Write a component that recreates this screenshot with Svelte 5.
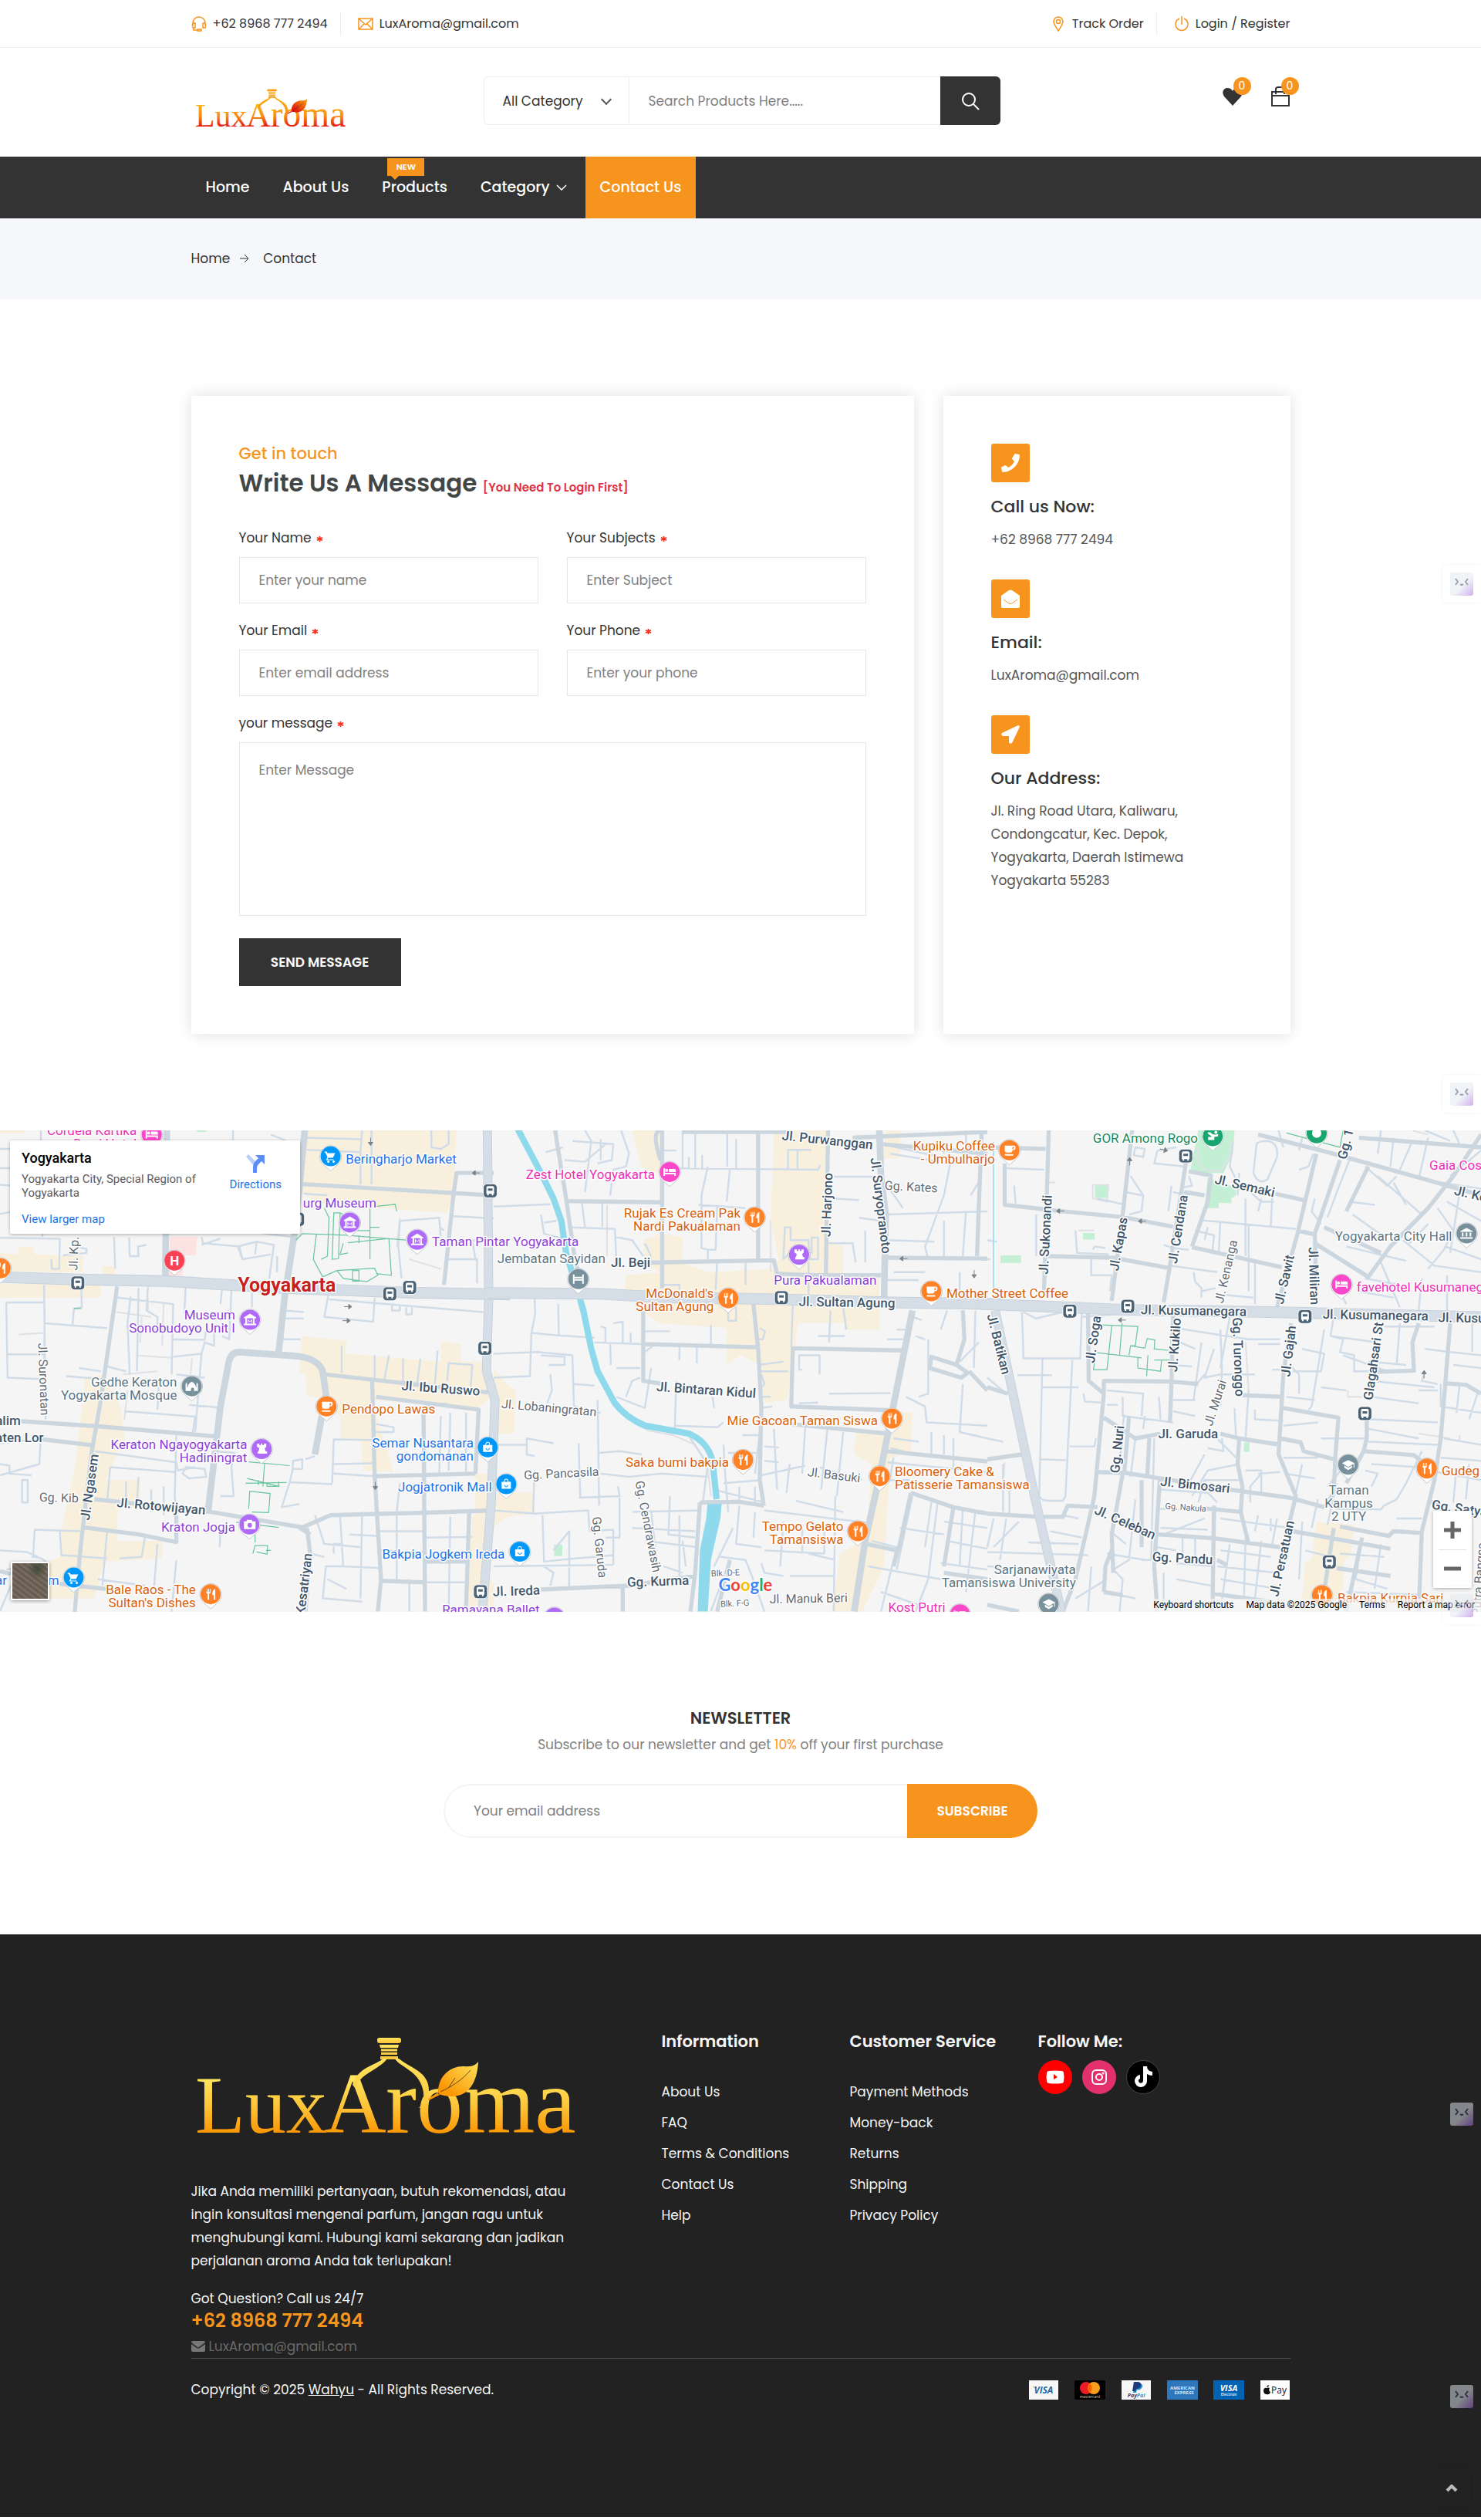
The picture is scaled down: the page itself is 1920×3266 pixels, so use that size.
<script>
  const topLeft = [
    { icon: 'headset', text: '+62 8968 777 2494' },
    { icon: 'mail', text: 'LuxAroma@gmail.com' }
  ];
  const topRight = [
    { icon: 'pin', text: 'Track Order' },
    { icon: 'power', text: 'Login / Register' }
  ];
  const nav = [
    { text: 'Home' },
    { text: 'About Us' },
    { text: 'Products', badge: 'NEW' },
    { text: 'Category', more: true },
    { text: 'Contact Us', active: true }
  ];
  const fields = [
    { id: 'name', label: 'Your Name', hint: 'Enter your name', type: 'text' },
    { id: 'subject', label: 'Your Subjects', hint: 'Enter Subject', type: 'text' },
    { id: 'email', label: 'Your Email', hint: 'Enter email address', type: 'email' },
    { id: 'phone', label: 'Your Phone', hint: 'Enter your phone', type: 'tel' }
  ];
  const contacts = [
    { icon: 'phone', title: 'Call us Now:', text: '+62 8968 777 2494' },
    { icon: 'open', title: 'Email:', text: 'LuxAroma@gmail.com' },
    {
      icon: 'arrow',
      title: 'Our Address:',
      text: 'Jl. Ring Road Utara, Kaliwaru, Condongcatur, Kec. Depok, Yogyakarta, Daerah Istimewa Yogyakarta 55283'
    }
  ];
  const linkColumns = [
    { title: 'Information', links: ['About Us', 'FAQ', 'Terms & Conditions', 'Contact Us', 'Help'] },
    { title: 'Customer Service', links: ['Payment Methods', 'Money-back', 'Returns', 'Shipping', 'Privacy Policy'] }
  ];

  // The map is drawn as three tiles side by side; tile units are finer than screen units.
  const SX = 0.4082;
  const SY = 0.4146;
  const mx = (t, x) => t * 640 + x * SX;
  const my = (y) => (y - 37) * SY;
  const tileTransform = (t) => `translate(${t * 640} ${-37 * SY}) scale(${SX} ${SY})`;

  const tiles = [
    {
      commercial:
        'M0 420L55 425L60 400L105 400L110 425L265 430L260 480L0 478ZM0 515L320 520L320 560L0 560ZM325 462H365V488H325ZM965 37L1450 37L1440 240L1420 295L1010 265L955 230ZM960 680L1100 695L1098 735L1400 760V695L1465 705V760H1545L1560 870L1520 905L1180 880L1250 1105L1155 1100L1145 1005L1080 1000L1082 930L1030 880L975 865L970 795L950 795ZM270 810L330 800L385 905L395 1000L335 1130L445 1130L445 1215L375 1210L370 1320L515 1320L515 1375L330 1385L300 1500L100 1500L120 1400L190 1370L195 1285L240 1080ZM1510 1110H1568V1240H1510ZM1500 1240L1540 1240L1530 1420L1568 1450V1541H1480ZM0 37H80V46H0Z',
      pink: 'M540 370H628L620 428H582L580 490L535 494Z',
      green: 'M625 37H655V42H625Z',
      minor:
        'M0 95H130M0 155H130V37M0 207L40 210L44 290L0 298M130 95L135 370M0 373L190 376L188 470L165 470L163 440M245 376L240 400L275 408V420L200 428M362 370L366 470M410 372L412 430H440L438 400L465 395M20 575H138M20 575L24 810L140 815L142 600M25 737H140M142 640L340 655M140 520L145 940M258 525L260 590L235 594L230 650M372 560L550 580L545 800M415 555L405 640L412 800M440 530L435 790M470 525L465 600L500 620L500 660M590 528L585 610M545 690L650 692L655 660L680 670V710L650 700L640 735L550 745M640 735L620 980M560 800L650 810M600 895L690 903M395 915L620 932L612 980M505 820L500 910M210 805L330 815M250 780L320 790M340 775L400 790M705 535L700 580M735 535L728 690L705 680M800 545V590M0 1015L90 1005M0 1080L30 1085V1110L100 1115M70 1130V1200H88V1130ZM130 985L125 1080L0 1115M300 1040L560 1075L565 1100L620 1090M590 1090L650 1095L655 1120L600 1125L580 1110ZM560 990L555 1180L560 1230M350 1090L340 1200M350 1090L555 1105M400 1135V1190M440 1120L435 1195M480 1160V1230M520 1150V1240M680 1040L745 1045L735 1090L742 1180L700 1180M110 1285L255 1290M110 1285L105 1370M190 1290L195 1365L340 1375M340 1290L325 1460M460 1310L450 1370L380 1375M500 1330L490 1460M560 1380L545 1541M0 1350L85 1355L120 1370M60 1430H140M100 1370Q160 1370 150 1420M700 1280L698 1340M0 1540L60 1400M20 1410L100 1400M310 1440L460 1460M640 370L645 390L760 400L770 440L860 425M770 440L755 400L815 385L870 395L865 430L855 500M815 385L810 425M640 395L700 375M740 37V70M880 430V480M860 50L910 70M690 340L925 370M975 98L1145 105L1150 37M1145 105V205M975 60L1145 65M1180 37V205M1370 37V90L1400 95L1425 80L1425 37M965 235L1040 240M1270 320L1395 310L1400 380M1270 320L1265 400L1275 500M1395 340L1410 350M1430 305L1568 312M1430 380L1568 382M1420 440L1515 440V515M1510 440L1500 380M905 600L965 605M905 625L965 625M895 690L955 690M1045 540L1030 620L1185 635L1190 560M1045 565L1535 605M1245 580V600H1270V585M1290 590V612H1308V590M1085 795V710M1190 740V815M1235 740L1220 820M1280 750V825M1335 750L1325 830M1390 725L1380 840M1420 820L1425 765L1500 770L1495 840M1350 900L1420 890M1195 955L1250 965V980H1190M1180 1005L1060 1003L1055 1140M920 1137L1055 1143M920 1137L895 1215L950 1205M930 1070L960 1065V1095L930 1095ZM930 1095L920 1137M1000 1055L970 1065M1060 1080L1185 1078M1060 1110L1190 1118M1270 1140L1260 1230M1400 930L1395 1110M1430 920L1425 1100M1480 920V1105M1200 1290H1345M1260 1235V1440M1210 1350L1350 1355M1300 1440V1541M1000 1240L1030 1330L1150 1340M1150 1230L1145 1500M1110 1300L1200 1305M1080 1240L1090 1400L1035 1400L1025 1500L1150 1510M1090 1400L1205 1405M1430 1245L1425 1541M1350 1310L1500 1308M1350 1450H1490M1040 1440L1100 1470M985 1360L1030 1370M1060 1360V1330H1090',
      path:
        'M60 675L140 670M370 605L480 620M400 650L550 665M430 740L545 748M390 800L500 790M470 560V600M520 575L515 710M450 620L445 700M405 850L395 940M610 750L605 800M1270 310L1260 400M1300 440L1400 470',
      mid:
        'M372 525L320 880L290 1050L255 1350L235 1568M50 945L310 962L690 994M110 1000L300 1022M265 1278L440 1300L560 1324V1240M300 1190L660 1228L960 1278L1050 1240L1350 1232L1568 1225M1182 820L1190 1120L1210 1440L1200 1541M1190 1118L1510 1110M1195 870L1520 910L1510 1110M1490 1230L1480 1541M1345 900L1350 1541M960 205L1560 240M1568 170H1450L1440 240L1410 520M975 1280L985 1360L970 1541M1035 800L1290 828L1550 856M60 1440L420 1480M0 1415L60 1430M950 1278L985 1300M1210 1445L1350 1450M1350 1385L1490 1385',
      wide:
        'M968 37L940 330L905 550L885 730M530 37L525 500M660 1235L700 900L725 770Q730 730 760 730L940 742Q1010 750 1025 790L1035 860L1000 1050',
      major: 'M-20 495L240 503L520 508L900 530L1300 544L1620 550',
      major2: 'M1548 37L1552 560L1545 790L1572 880L1560 1200L1530 1568',
      trail:
        'M940 380L960 360L1100 365L1290 380M1030 280L1045 310L1040 430L1020 440M1060 295L1055 440L1075 438L1080 295ZM1080 295L1110 310M1175 270V440M1175 340H1205M1110 350H1175M1140 365V390M1105 388L1235 375L1243 490L1195 485M1005 360L995 440L1025 495L1070 475L1190 468L1200 490L1165 510L1090 500L1070 475M1120 475H1140V508H1120ZM1090 390L1080 425L1105 420M1190 275L1255 268L1260 290M235 594H258M790 1073L920 1085M840 1080L835 1150M780 1140L910 1138M785 1125L885 1150V1135M820 1130V1145M848 1140V1150H888M793 1165L858 1172L853 1232L800 1230M793 1165L790 1220M750 1262L885 1278M810 1300V1325M803 1360L810 1335L850 1335L848 1362L815 1355M845 1350H860'
    },
    {
      commercial:
        'M440 37H535L545 175L470 155L450 80ZM890 37H1060L1055 380L1110 400V490L1225 500V660H1115V640H965L955 760L930 880L860 890L850 770L785 740L740 770V655L530 640L480 610L470 560L415 540L420 490L530 480L480 460L475 380L530 360L600 370L598 450L680 480L895 470L905 440L880 320ZM1245 37H1290V125H1235ZM1150 980L1235 990L1245 910L1330 920L1325 1045L1260 1060L1240 1400L1170 1541H1075L1100 1360L1185 1310L1200 1080L1145 1050ZM0 780L40 830L70 850L65 985L0 985ZM0 1170H130V1235L45 1245L0 1275Z',
      pink: '',
      green: 'M192 1332H218V1368H192Z',
      minor:
        'M0 275L180 268M200 90V37M225 130L290 135L355 80M290 37L310 70L290 230M250 70L380 80L375 130L330 140M340 65V130M405 37L430 110L420 150L380 160L370 240M165 105L220 90M560 155L1030 160L1038 145M600 37V155M640 37V155M620 120V155M662 115V155M742 37V150M770 65V155M540 100H580M935 160V98H1010M965 98V155M150 300L160 360L220 375M160 325L200 320M235 340L385 345L390 450M385 370L440 380L475 430M280 260L290 340M345 260V340M480 390L500 430M680 150L660 240L660 405L680 410V440M650 270L800 280M750 160L740 260M710 270L705 410L680 410M800 440V520M530 520H590V535M710 440L705 535M745 590V632H770V590M130 560L132 610L120 670L205 678L320 685M205 580L207 678M120 670L115 805L0 810M0 735L140 730L250 740L255 900M150 740L225 745V770L175 770M180 800L185 850L170 890M255 830L320 835M320 700L470 705M340 650L355 655V700M380 640L410 635V700M370 700L372 770M390 780H465M435 670V700M480 665H560M480 730L520 700M500 780L480 905L390 870M465 810L440 820L420 870M580 820L575 970M590 705V755M645 715V765M690 645V705M695 870L700 905M575 960L710 965L730 950M620 980L625 1000L680 1080L665 1195M330 880L335 1210M320 920H340M270 1015L275 1185M255 900L330 920M0 1020H105V1000L190 1015M105 1010V1050L130 1055M335 1045L400 1040L470 1050M340 1110L430 1120L530 1110L680 1120M270 1185L400 1180L395 1150M130 1100L125 1235M0 1225L130 1235L300 1225L305 1290L380 1285M155 1240L160 1385L260 1375L380 1365M160 1400L190 1420L180 1460M190 1350L240 1290L240 1465M0 1400L380 1395M380 1285L380 1395M400 1185V1310L355 1310M440 1230L660 1225M560 1180L555 1300L640 1310M500 1225L520 1400M590 1240V1440M440 1280L640 1290M480 1320L650 1340M600 1320L610 1400M600 1420L540 1400M730 1020L735 1110L745 1230M700 1160L860 1200M730 1140L850 1130M780 1150V1200M830 1150V1200M850 940L830 1110M790 990L850 990M745 1045H850M850 870H880M850 905L885 900M860 1025L905 1028M860 1070L905 1075M850 1115L990 1085M990 960L980 1110M1060 970L1040 1160M1110 980L1090 1180M1035 1090L1170 1130M890 970L900 1160M940 1080L930 1170M960 1195L1110 1230M860 1225L1200 1265M760 1280L720 1360L700 1400M780 1210L770 1330L850 1340M830 1230L825 1310M720 1370L800 1380L820 1430M690 1540L750 1380M850 1390L860 1420L920 1430M920 1260L910 1400M980 1270V1360M1050 1280V1360L860 1350M1085 1180L1080 1541M940 1430L1080 1430M820 1430L860 1541M1000 1360L1085 1380M950 585L945 715M970 740H1035V800M970 740V785L980 785M1070 600L1065 700M1110 590L1120 660M1030 680L1115 680M970 890L1030 888M1065 860L1260 858M840 770L920 760M850 790H935M845 655L862 665L855 690L840 690M850 800L860 830L850 840M1000 590V450M1060 390H1140L1150 450M1180 350V450M1075 250L1160 255M1160 310L1230 320M1080 182H1210M1250 300L1568 290M1230 80L1420 120M1260 110L1450 140L1430 240L1370 400L1380 440M1250 210L1300 280M1420 70L1430 110M1500 37V90L1540 70M1540 200L1515 240M1480 480V580M1270 480H1370M1250 505H1350M1330 620L1360 630M1280 660H1320M1250 690H1300M1340 680L1370 690M1440 600L1420 660M1530 600L1525 780M1490 830L1480 980L1568 1000M1380 690V860L1350 870M1310 870L1370 900L1375 950L1568 960M1270 1000L1350 1010M1390 980V1050M1430 990V1050M1460 1000V1090M1250 1075L1568 1105M1250 1130H1320M1260 1030L1300 1040M1330 1180L1280 1410M1200 1320L1280 1340L1230 1541M1390 1200L1370 1340M1410 1200L1380 1440L1340 1541M1290 1280L1430 1300M1430 1260L1568 1280M1190 1400L1420 1440M1490 1215L1480 1400M1530 1225L1500 1480M1440 1320L1568 1345M1420 1390L1568 1410M1230 1480L1410 1541M1270 1060L1260 1120M1540 700L1480 760M1250 380L1400 385M1430 320V430M1500 290L1490 430M925 340H943V380H1000L1005 440H1030V372H1010V420H940L920 440Z',
      path:
        'M85 37L190 260L215 320L230 440M270 580L330 780L380 880L430 940L490 975L570 990L640 1020L680 1090L690 1180M360 270V430M880 320V480',
      mid:
        'M225 258L535 262M195 37L230 250L255 420L280 530M535 37V530M840 37V440M500 450L890 443L900 485L1010 490L1230 490M1062 37L1055 490M600 42L930 42M1140 60L1568 42M1235 80L1568 110M1250 435L1568 438M475 590V820L540 830M480 705L840 715M825 580L840 720L850 900L845 1130L858 1210M945 900L950 718L1300 725M940 900L1260 912M945 955L1250 985M1250 1040L1568 1072M660 1200L780 1198L858 1210M655 1200L640 1420L625 1541M150 1472L430 1460L640 1430M410 1465V1541M1490 600L1495 690L1470 770M1390 745L1470 770L1505 795L1485 810L1385 780ZM1510 790L1568 850M1325 1170L1460 1215L1568 1235M1460 1215L1430 1400M1325 1170L1290 1330L1270 1400M1185 1330L1280 1350M1550 37L1535 430M530 37Q500 40 530 130M1430 1420L1568 1440M710 1541L750 1380M0 830V1100',
      wide: 'M1225 37L1230 180L1245 300L1240 560M1330 600L1265 920L1225 1120L1180 1320L1145 1541',
      major: 'M-20 545L340 548L520 558L900 565L1260 575L1620 580',
      major2: '',
      river: true,
      trail: ''
    },
    {
      commercial: 'M1045 1260L1165 1270L1155 1360L1130 1390V1470L1080 1541H995L1010 1385L1030 1380Z',
      pink: '',
      green:
        'M670 37L785 37L780 110L750 170H690L645 160ZM700 185L790 215V240L775 250V265L735 263V280L690 280ZM342 210H383V248H342ZM304 358H341V378H304ZM42 428H107V451H42ZM815 1012H832V1042H815Z',
      minor:
        'M55 90L185 95M60 155L180 160M85 210L90 265M155 300V430M0 380L30 385M0 440H10M280 350L285 420L385 425M335 410L340 400L375 405M330 430V490L395 490L390 540M470 90L500 95L495 120L465 115ZM540 100L530 140L625 150M540 100L600 90M455 180L495 240L490 290L450 300M440 230L490 240M350 250L440 270M640 180L650 210L625 215M585 210L575 290M590 230L640 240M780 75L770 150L790 190L870 260M855 80Q860 70 890 70Q925 75 920 120L890 190Q860 210 845 170ZM800 170L795 240M820 250V430M870 250L860 290M905 240L900 340M870 260H910M680 318L980 345M700 340L690 380M660 350L720 365L715 415M735 420L740 320M830 330V540M560 395L590 405L640 410M580 460L730 480M655 480L660 510L680 530V560M680 540L725 530M850 450V580M740 550L845 560M1040 250L1030 290L1060 330M990 160L1020 150L1035 110M925 37L940 90M1000 60L990 100M1150 130L1110 230L1080 310M1070 340L1160 380M1200 150L1270 210L1300 180M1150 260L1230 270M1160 300L1260 370M1240 180L1380 300M1290 200L1330 270M1250 37L1240 110M1290 60L1280 150M1350 70L1310 160M1400 60L1370 190M1430 280L1480 350L1450 410L1400 470M1455 400L1568 440M1460 260L1568 320M1400 330L1340 390M1320 380L1420 460L1568 480M1140 400L1330 445M1180 540L1290 560M1130 560L1140 580M1200 500L1310 520M1250 450L1310 590M1380 500L1370 600M1460 490V600M110 605L115 750H295L300 605M115 605L155 625L240 605M175 750L165 1180Q170 1195 200 1195H240L248 1180L270 755M95 802H205M170 840H290M165 1065L250 1068M262 1025L340 1025L345 1000M305 860L310 885L360 888M0 810L60 860M300 620L430 610M0 1150L50 1160M50 1080V1230M0 1000L50 1010M70 1160V1235M20 1250L0 1340M60 1250L40 1380M100 1260L20 1340M200 1290L300 1310M130 1325L290 1330M0 1355L320 1365M0 1400L200 1410M240 1240L290 1250M380 850L495 860L490 930M380 895H415M430 870V930L590 950M435 925L430 960M500 930L495 970M545 870L550 940M590 770L650 775M590 690L660 720M600 655L760 680L830 690L930 690M680 700L655 880M720 720L690 810L740 800L850 800M740 660L745 780L740 900M770 620L740 780M660 880H590M590 915L660 930M690 800L665 830M860 705H930M905 785H940M830 850L820 1000M785 905L790 1000M850 910V940L940 945M990 860V800L960 770M1000 720L1070 735L1060 790L970 790M1070 660L1030 900L1020 910M1090 680L1130 690L1120 730L1165 740V790H1230M1100 620L1090 680L1240 700M1060 840L1140 850M950 870L1040 880M1050 950L940 960M1060 1000L1200 1000M1210 760L1330 770M1220 820L1420 840M1220 870L1370 890M1310 640L1300 770M1260 650H1420M1390 790L1380 820L1430 830M1390 720L1470 730L1568 740M1480 770L1568 780M1440 830V900L1568 920M1370 850L1430 850M1210 940L1430 950M1210 970L1370 1000M1210 1010L1430 1020M1220 1080L1370 1090M1380 1040L1330 1140L1300 1190L1260 1210L1250 1222L1110 1220M1200 1100L1240 1110L1220 1150M1140 1080L1080 1150M1000 1080L980 1170M940 1060L1050 1060M945 1110L1040 1125M860 1110L930 1105M820 1100H870V1170M870 1110L835 1150V1200M650 1180L700 1100L800 1080M690 1050L640 1140M700 1030L750 1040L745 1000M730 1000L790 1060M800 1130L690 1130L670 1200M550 1160L700 1170L730 1200M545 1220L690 1225M550 1280L700 1285M560 1300L690 1250M470 1000L455 1120M470 1190L450 1380L400 1410M530 1000L520 1380L490 1380M430 1000L415 1100M390 1290L440 1330M380 1360L500 1380M400 1410L430 1440L420 1541M370 1480L470 1500M330 1400L320 1541M280 1500L380 1440M540 1340L600 1350M620 1300L620 1360M660 1310V1370M600 1390L720 1400M600 1440L710 1460M560 1420V1520M740 1250L960 1280M740 1350L900 1370M730 1400L920 1420M740 1440L920 1470M860 1240L850 1290M900 1250V1290M820 1310L815 1500M870 1320L850 1500M770 1330L740 1541M920 1250L905 1330M1000 1260L990 1440M1050 1190L1030 1280M1110 1140L1080 1270M1010 1350L1090 1370M1110 1410L1280 1430M1120 1360L1260 1370M1190 1310L1170 1440L1270 1470M1250 1330L1230 1470M1140 1480L1400 1490M1300 1250H1380M1400 1100L1568 1130M1440 1060L1568 1070M1450 1000L1568 1020M1490 1090L1480 1200M1530 1080L1520 1190M1500 830L1490 920M1560 850L1530 940M1460 640V600M1540 640V730M1480 37L1500 80M1390 37L1470 70M1568 100L1470 180M1500 230L1470 420M1440 200L1568 220M1130 740L1270 790',
      path: 'M190 200H215M290 350L340 350M335 208H385L380 260L335 250ZM820 700L830 850M1145 850V870H1190M1370 985L1470 1000M1500 990V1010M55 1075L50 1150M130 1325L220 1330M1350 37L1400 50M670 90L665 130L690 160L740 165L770 120L775 70',
      mid:
        'M195 37L180 540M55 140V270L150 280L220 288L430 308L590 338M460 37L430 300L395 570M632 130L580 460L560 575M640 165L710 178L700 260L650 400M190 430L400 435L580 468M650 402L935 465M625 230L690 240M860 50L1080 105L1390 190L1568 240M1045 110L985 360L920 590M1210 150L1140 290M1120 130L1040 360L1045 550M985 350L1040 362M1040 390L1210 495L1280 400L1400 280L1480 180L1568 50M1070 340L1250 420M320 610L322 820L370 860L340 1180L280 1440L240 1541M370 860V820L580 822L670 830M590 610L585 820L580 950M370 935L470 1000L550 985M450 930L435 1110M515 990L508 1115M350 1105L440 1108L550 1125L770 1160L960 1185L1070 1215M548 1125L530 1400L540 1541M720 1210L715 1541M650 1215L810 1230M965 640L940 800L925 1050L980 1180L960 1260L950 1300M810 865L940 870M740 985L800 1000L920 1018M800 1000L795 1080L810 1150L805 1230L830 1330M940 905L1115 935L1105 1060L1100 1170L1070 1215M930 1000L995 1012L1005 1040L1100 1065M1205 930L1205 1000L1195 1040L1140 1140M1195 1040L1355 1052L1390 1080M1230 792L1355 788L1350 700L1370 640M1470 640L1440 1000L1420 1130L1380 1290L1370 1541M1455 828L1520 832L1568 860M540 1300L720 1312L930 1340M970 1290L1280 1345M1120 1275L1275 1305L1290 1290L1375 1295M1100 1280L1060 1541M1190 1310L1140 1541M1110 1405L1280 1430M715 1485L900 1510M730 1380L760 1395M0 1235L165 1245L240 1245L255 1210L350 1215M0 1065L110 1050M0 840L65 860M370 1480L375 1400L395 1350M400 1420L395 1300L430 1110M490 1130L490 1340M1405 1195L1440 1210M0 90L185 95M1180 60L1568 90M370 1480L430 1490M0 1520L100 1541M915 235L1005 255',
      wide: '',
      major: 'M-20 580L200 588L440 598L900 605L1620 622',
      major2: 'M25 600L90 900L150 1180L235 1541',
      trail:
        'M360 645L478 650L470 710L455 710L450 740M395 648L380 785L337 785L340 765M428 640L420 740M348 732L490 748M455 710L500 718L508 688L532 692L530 720L578 725M510 740L506 805M478 748V780L550 790L553 757M530 755H580M950 45L1120 90L1130 37'
    }
  ];

  // Places: t tile, x/y marker centre, side label placement, c colour, k glyph.
  const C = { o: '#d9610c', b: '#1a73e8', p: '#8a3fd8', k: '#ee2fb8', g: '#18885a', s: '#5b7583' };
  const pinFill = { o: '#ff8126', b: '#0097fb', p: '#b06af8', k: '#fb48cb', g: '#18a56f', s: '#78919d', r: '#f94355' };
  const places = [
    { t: 0, x: 1050, y: 118, c: 'b', k: 'cart', lx: 1098, ly: 140, a: 'start', l: ['Beringharjo Market'] },
    { t: 0, x: 1111, y: 325, c: 'p', k: 'museum', lx: 1195, ly: 278, a: 'end', l: ['urg Museum'] },
    { t: 0, x: 1325, y: 379, c: 'p', k: 'museum', lx: 1372, ly: 400, a: 'start', l: ['Taman Pintar Yogyakarta'] },
    { t: 0, x: 794, y: 629, c: 'p', k: 'museum', lx: 747, ly: 629, a: 'end', l: ['Museum', 'Sonobudoyo Unit I'] },
    { t: 0, x: 609, y: 837, c: 's', k: 'mosque', lx: 562, ly: 838, a: 'end', l: ['Gedhe Keraton', 'Yogyakarta Mosque'] },
    { t: 0, x: 1037, y: 900, c: 'o', k: 'cup', lx: 1086, ly: 922, a: 'start', l: ['Pendopo Lawas'] },
    { t: 0, x: 831, y: 1033, c: 'p', k: 'rook', lx: 785, ly: 1033, a: 'end', l: ['Keraton Ngayogyakarta', 'Hadiningrat'] },
    { t: 0, x: 1549, y: 1028, c: 'b', k: 'bag', lx: 1504, ly: 1029, a: 'end', l: ['Semar Nusantara', 'gondomanan'] },
    { t: 1, x: 40, y: 1143, c: 'b', k: 'bag', lx: -6, ly: 1165, a: 'end', l: ['Jogjatronik Mall'] },
    { t: 0, x: 792, y: 1269, c: 'p', k: 'camera', lx: 747, ly: 1291, a: 'end', l: ['Kraton Jogja'] },
    { t: 1, x: 83, y: 1354, c: 'b', k: 'bag', lx: 35, ly: 1375, a: 'end', l: ['Bakpia Jogkem Ireda'] },
    { t: 0, x: 234, y: 1435, c: 'b', k: 'cart', lx: 188, ly: 1458, a: 'end', l: ['Pasar Ngasem'] },
    { t: 0, x: 669, y: 1487, c: 'o', k: 'fork', lx: 622, ly: 1487, a: 'end', l: ['Bale Raos - The', "Sultan's Dishes"] },
    { t: 0, x: 482, y: 50, c: 'k', k: 'bed', lx: 434, ly: 52, a: 'end', l: ['Cordela Kartika', 'Dewi Hotel'] },
    { t: 0, x: 554, y: 444, c: 'r', k: 'H', lx: 0, ly: 0, a: 'start', l: [] },
    { t: 0, x: 2, y: 468, c: 'o', k: 'fork', lx: 0, ly: 0, a: 'start', l: [] },
    { t: 1, x: 559, y: 167, c: 'k', k: 'bed', lx: 512, ly: 189, a: 'end', l: ['Zest Hotel Yogyakarta'] },
    { t: 1, x: 829, y: 309, c: 'o', k: 'fork', lx: 784, ly: 309, a: 'end', l: ['Rujak Es Cream Pak', 'Nardi Pakualaman'] },
    { t: 1, x: 269, y: 502, c: 's', k: 'bridge', lx: 355, ly: 451, a: 'end', l: ['Jembatan Sayidan'] },
    { t: 1, x: 970, y: 426, c: 'p', k: 'rook', lx: 1053, ly: 519, a: 'middle', l: ['Pura Pakualaman'] },
    { t: 1, x: 745, y: 562, c: 'o', k: 'fork', lx: 699, ly: 561, a: 'end', l: ["McDonald's", 'Sultan Agung'] },
    { t: 1, x: 1390, y: 540, c: 'o', k: 'cup', lx: 1438, ly: 561, a: 'start', l: ['Mother Street Coffee'] },
    { t: 2, x: 70, y: 99, c: 'o', k: 'cup', lx: 24, ly: 99, a: 'end', l: ['Kupiku Coffee', '- Umbulharjo'] },
    { t: 1, x: 1265, y: 938, c: 'o', k: 'fork', lx: 1220, ly: 959, a: 'end', l: ['Mie Gacoan Taman Siswa'] },
    { t: 1, x: 792, y: 1067, c: 'o', k: 'fork', lx: 747, ly: 1088, a: 'end', l: ['Saka bumi bakpia'] },
    { t: 1, x: 1226, y: 1118, c: 'o', k: 'fork', lx: 1274, ly: 1118, a: 'start', l: ['Bloomery Cake &', 'Patisserie Tamansiswa'] },
    { t: 1, x: 1157, y: 1290, c: 'o', k: 'fork', lx: 1111, ly: 1290, a: 'end', l: ['Tempo Gelato', 'Tamansiswa'] },
    { t: 1, x: 193, y: 1560, c: 'p', k: 'camera', lx: 146, ly: 1550, a: 'end', l: ['Ramayana Ballet'] },
    { t: 1, x: 1481, y: 1550, c: 'k', k: 'bed', lx: 1435, ly: 1542, a: 'end', l: ['Kost Putri'] },
    { t: 2, x: 716, y: 55, c: 'g', k: 'park', lx: 669, ly: 76, a: 'end', l: ['GOR Among Rogo'] },
    { t: 2, x: 1046, y: 46, c: 'g', k: 'dot', lx: 0, ly: 0, a: 'start', l: [] },
    { t: 2, x: 1404, y: -60, c: 'k', k: 'bed', lx: 1404, ly: 159, a: 'start', l: ['Gaia Cosmo Hotel'] },
    { t: 2, x: 1522, y: 359, c: 's', k: 'hall', lx: 1476, ly: 381, a: 'end', l: ['Yogyakarta City Hall'] },
    { t: 2, x: 1125, y: 519, c: 'k', k: 'bed', lx: 1173, ly: 541, a: 'start', l: ['favehotel Kusumanegara'] },
    { t: 2, x: 1146, y: 1082, c: 's', k: 'cap', lx: 1148, ly: 1175, a: 'middle', l: ['Taman', 'Kampus', '2 UTY'] },
    { t: 2, x: 1396, y: 1094, c: 'o', k: 'fork', lx: 1443, ly: 1115, a: 'start', l: ['Gudeg Yu Djum'] },
    { t: 2, x: 1063, y: 1490, c: 'o', k: 'fork', lx: 1112, ly: 1512, a: 'start', l: ['Bakpia Kurnia Sari'] },
    { t: 2, x: 195, y: 1517, c: 's', k: 'cap', lx: 281, ly: 1424, a: 'end', l: ['Sarjanawiyata', 'Tamansiswa University'] }
  ];
  const streets = [
    [0, 140, 815, 88, 'Jl. Suronatan', 1], [0, 233, 422, -88, 'Jl. Kp.', 1], [0, 284, 1152, -82, 'Jl. Ngasem'],
    [0, 187, 1184, 2, 'Gg. Kib', 1], [0, 512, 1212, 5, 'Jl. Rotowijayan'], [0, 1400, 843, 4, 'Jl. Ibu Ruswo'],
    [0, 965, 1455, -83, 'Kesatriyan'], [0, -97, 945, 0, 'Kauman Musalim'], [0, -101, 998, 0, 'Jl. Kauman Kadipaten Lor'],
    [1, 435, 450, 0, 'Jl. Beji'], [1, 1060, 67, 6, 'Jl. Purwanggan'], [1, 1058, 270, -88, 'Jl. Harjono'],
    [1, 1230, 272, 83, 'Jl. Suryopranoto'], [1, 1326, 212, 3, 'Gg. Kates', 1], [1, 1122, 574, 1, 'Jl. Sultan Agung'],
    [1, 675, 848, 4, 'Jl. Bintaran Kidul'], [1, 176, 903, 5, 'Jl. Lobaningratan', 1], [1, 215, 1108, -3, 'Gg. Pancasila', 1],
    [1, 1081, 1113, 7, 'Jl. Basuki', 1], [1, 338, 1340, 84, 'Gg. Garuda', 1], [1, 492, 1275, 79, 'Gg. Cendrawasih', 1],
    [1, 522, 1446, -2, 'Gg. Kurma'], [1, 72, 1476, -2, 'Jl. Ireda'], [1, 1000, 1499, -1, 'Jl. Manuk Beri', 1],
    [2, 184, 363, -87, 'Jl. Sukonandi'], [2, 416, 392, -80, 'Jl. Kapas'], [2, 605, 346, -81, 'Jl. Cendana'],
    [2, 757, 478, -77, 'Jl. Kenanga', 1], [2, 818, 210, 13, 'Jl. Semaki'], [2, 943, 503, -77, 'Jl. Sawit'],
    [2, 1038, 492, 88, 'Jl. Miliran'], [2, 1137, 80, -76, 'Gg. 1'], [2, 1535, 235, 13, 'Jl. Ke'],
    [2, 655, 600, 1, 'Jl. Kusumanegara'], [2, 1233, 614, 1, 'Jl. Kusumanegara'], [2, 1600, 624, 1, 'Jl. Kusumanegara'],
    [2, 37, 705, 76, 'Jl. Batikan'], [2, 336, 690, -82, 'Jl. Soga'], [2, 594, 708, -86, 'Jl. Kukilo'],
    [2, 798, 745, 88, 'Gg. Turonggo'], [2, 956, 727, -83, 'Jl. Gajah'], [2, 1226, 758, -82, 'Glagahsari St'],
    [2, 723, 888, -72, 'Jl. Murai', 1], [2, 638, 985, 0, 'Jl. Garuda'], [2, 412, 1034, -84, 'Gg. Nuri'],
    [2, 660, 1145, 6, 'Jl. Bimosari'], [2, 438, 1262, 24, 'Jl. Celeban'], [2, 620, 1374, 3, 'Gg. Pandu'],
    [2, 935, 1375, -78, 'Jl. Persatuan'], [2, 1500, 1218, 8, 'Gg. Satya'], [2, 1560, 1440, -86, 'Putra Bangsa', 1]
  ];
  const tinyStreets = [
    [1, 736, 1420, -3, 'Blk. D-E'], [1, 766, 1515, -3, 'Blk. F-G'], [2, 630, 1215, 4, 'Gg. Nakula']
  ];
  const buses = [
    [0, 247, 514], [0, 1238, 548], [0, 1301, 528], [0, 1540, 718], [0, 1526, 1479], [0, 1557, 226], [0, 945, 315],
    [1, 914, 560], [2, 262, 602], [2, 446, 587], [2, 630, 117], [2, 1009, 619], [2, 1199, 922], [2, 1086, 1386]
  ];
  const arrows = [
    [0, 1177, 72, 90], [0, 1512, 170, 180], [0, 1105, 588, 0], [0, 1100, 632, 0], [0, 1192, 1148, 90],
    [1, 1302, 438, 180], [1, 1526, 486, 90], [2, 452, 134, -90], [2, 560, 98, 15], [2, 232, 289, 180],
    [2, 492, 321, 180], [2, 428, 630, 180], [2, 1387, 800, -90]
  ];
  const payments = ['visa', 'mastercard', 'paypal', 'amex', 'electron', 'apple'];
</script>

{#snippet logo(id, top, mid, bottom)}
  <svg viewBox="0 0 500 134" role="img" aria-label="LuxAroma">
    <defs>
      <linearGradient id="{id}-t" gradientUnits="userSpaceOnUse" x1="0" y1="58" x2="0" y2="128">
        <stop offset="0" stop-color={top} /><stop offset=".5" stop-color={mid} /><stop offset="1" stop-color={bottom} />
      </linearGradient>
      <linearGradient id="{id}-n" x1="0" y1="0" x2="0" y2="1">
        <stop offset="0" stop-color={top} /><stop offset="1" stop-color={mid} />
      </linearGradient>
      <linearGradient id="{id}-l" x1="1" y1="0" x2="0" y2="1">
        <stop offset="0" stop-color={top} /><stop offset=".7" stop-color={bottom} />
      </linearGradient>
    </defs>
    <g fill="url(#{id}-t)" font-family="'Liberation Serif', serif">
      <text x="5" y="127" font-size="106">Lux</text>
      <text x="172" y="127" font-size="112">A</text>
      <text x="252" y="127" font-size="120">roma</text>
    </g>
    <g fill="url(#{id}-n)">
      <rect x="241" y="4" width="31" height="7" rx="3" />
      <path d="M244 13h25l-1 4h-23ZM246 18.500h21v3h-21ZM246 23h21v3h-21ZM245 28h23v4h-23Z" />
      <path d="M249 31C238 40 216 42 209 65L213 70C218 50 243 46 254 31ZM264 31C270 42 294 46 300 70C303 82 300 90 295 95C304 94 307 84 308 74C309 48 285 44 269 31Z" />
    </g>
    <path fill="url(#{id}-l)" d="M320 77C319 52 338 40 354 41C364 42 369 39 372 35C371 57 362 90 320 77ZM320 75L307 83L308 85L322 78Z" />
    <path d="M323 74C336 68 350 60 362 46M334 68L342 56" fill="none" stroke="#222" stroke-opacity=".7" />
  </svg>
{/snippet}

{#snippet pinGlyph(k)}
  {#if k === 'fork'}
    <path d="M-6-7v4q0 2 2 2v8h2v-8q2 0 2-2v-4h-1v4h-1v-4h-1v4h-1v-4h-1v4h-1v-4ZM6-7q-4 1-4 8h2v6h2Z" />
  {:else if k === 'cart'}
    <path d="M-8-6h3l1 2h10l-3 6h-6l-1 2h8v1h-10l2-4l-3-6h-1Z" /><circle cx="-3" cy="7" r="1.500" /><circle cx="4" cy="7" r="1.500" />
  {:else if k === 'bag'}
    <path fill-rule="evenodd" d="M-6-3h3q0-4 3-4t3 4h3v9h-12ZM-2-3h4q0-3-2-3t-2 3ZM-3 1q1 3 3 3t3-3h-1q-1 2-2 2t-2-2Z" />
  {:else if k === 'cup'}
    <path fill-rule="evenodd" d="M-6-6h12q2 0 2 3t-4 3q0 3-3 3h-4q-3 0-3-3ZM4-4v3q2 0 2-2t-2-1ZM-6 5h11v2h-11Z" />
  {:else if k === 'museum'}
    <path fill-rule="evenodd" d="M-8-3L0-8L8-3v1h-2v7h2v2h-16v-2h2v-7h-2ZM-4-2v7h8v-7ZM-3 4v-5l3 3l3-3v5h-1v-3l-2 2l-2-2v3Z" />
  {:else if k === 'rook'}
    <path d="M-6-7h3v2h2v-2h2v2h2v-2h3v4l-2 2l1 4h2v3h-12v-3h1l1-4l-3-2Z" />
  {:else if k === 'bed'}
    <path fill-rule="evenodd" d="M-8-5h2v6h14v4h-2v-2h-12v2h-2ZM-1-4h7q2 0 2 2v2h-9Z" /><circle cx="-4" cy="-2" r="2" />
  {:else if k === 'camera'}
    <path fill-rule="evenodd" d="M-7-4h3l1-2h6l1 2h4v10h-15ZM0-2a3 3 0 1 0 1 0Z" />
  {:else if k === 'mosque'}
    <path d="M-8 6v-9l1-2l1 2v4h1v-2q2-4 5-5q3 1 5 5v2h1v-4l1-2l1 2v9h-5v-3q-2-3-4 0v3Z" />
  {:else if k === 'bridge'}
    <path d="M-7-6h2v3h10v-3h2v12h-2v-4h-10v4h-2ZM-5-1v1h10v-1Z" />
  {:else if k === 'hall'}
    <path d="M-8-3L0-7L8-3v1h-16ZM-6-1h2v5h-2ZM-1-1h2v5h-2ZM4-1h2v5h-2ZM-8 5h16v2h-16Z" />
  {:else if k === 'cap'}
    <path d="M-8-2L0-6L8-2v6h-1v-5L0 3ZM-5 1v3l5 3l5-3v-3l-5 3Z" />
  {:else if k === 'park'}
    <path d="M-7-4q3-3 6 1q4 2 8 0v3q-3 1-5 1v4h-8v-4h5Z" /><circle cx="4" cy="-5" r="2" />
  {:else if k === 'dot'}
    <circle r="6" />
  {:else if k === 'H'}
    <text class="hospital" y="6" text-anchor="middle">H</text>
  {/if}
{/snippet}

{#snippet star()}
  <svg class="star" viewBox="0 0 10 10" role="img" aria-label="required"><path d="M5 1v8M1 3l8 4M9 3L1 7" /></svg>
{/snippet}

{#snippet face()}
  <svg viewBox="0 0 30 30" aria-hidden="true">
    <rect width="30" height="30" rx="3" fill="url(#face-fill)" />
    <path d="M7 8l3 4l-3 4M23 8l-3 4l3 4M13 15q2 2 4 0" fill="none" stroke="#39435a" stroke-width="2" />
  </svg>
{/snippet}

{#snippet lineIcon(name)}
  <svg class="line-icon" viewBox="0 0 20 20" aria-hidden="true">
    {#if name === 'headset'}
      <path d="M2 12V9a8 8 0 0 1 16 0v3M2 9h3v6H2q-1-3 0-6ZM18 9h-3v6h3q1-3 0-6ZM3 15v3h5M8 17h5v2H8Z" />
    {:else if name === 'mail'}
      <path d="M1 3h18v14H1ZM1 3l9 8l9-8M1 17l7-7M19 17l-7-7" />
    {:else if name === 'pin'}
      <path d="M10 19C6 13 4 10 4 7a6 6 0 0 1 12 0c0 3-2 6-6 12Z" /><circle cx="10" cy="7" r="2.500" />
    {:else}
      <path d="M7 3a8 8 0 1 0 6 0M10 0v11" />
    {/if}
  </svg>
{/snippet}

<div class="page">
  <svg class="defs" aria-hidden="true">
    <defs>
      <linearGradient id="face-fill" x1="0" y1="0" x2="1" y2="1">
        <stop offset=".55" stop-color="#e4eaf1" /><stop offset="1" stop-color="#a25fe0" />
      </linearGradient>
    </defs>
  </svg>

  <div class="topbar">
    <div class="container topbar-row">
      {#each [topLeft, topRight] as group}
        <ul class="top-list">
          {#each group as item}
            <li><a href="#top">{@render lineIcon(item.icon)}{item.text}</a></li>
          {/each}
        </ul>
      {/each}
    </div>
  </div>

  <header class="container header">
    <a class="brand" href="#top">{@render logo('head', '#f9b313', '#f98a12', '#e3150d')}</a>
    <form class="search">
      <select aria-label="Category"><option>All Category</option></select>
      <input type="search" aria-label="Search products" placeholder="Search Products Here....." />
      <button type="button" aria-label="Search">
        <svg viewBox="0 0 24 24" aria-hidden="true"><circle cx="10" cy="10" r="8" /><path d="M16 16l7 7" /></svg>
      </button>
    </form>
    <div class="actions">
      <a href="#wishlist" aria-label="Wishlist">
        <svg viewBox="0 0 26 26" aria-hidden="true"><path fill="#333" d="M13 25L2 13C-2 7 2 2 6 2c4 0 6 2 7 4c1-2 3-4 7-4c4 0 8 5 4 11Z" /></svg>
        <span class="count">0</span>
      </a>
      <a href="#cart" aria-label="Cart">
        <svg viewBox="0 0 26 26" aria-hidden="true"><path d="M2 7h22v18H2ZM2 12h22M7 10V4q0-3 3-3h5q3 0 3 3v6" fill="none" stroke="#333" stroke-width="2" /></svg>
        <span class="count">0</span>
      </a>
    </div>
  </header>

  <nav class="nav">
    <ul class="container nav-list">
      {#each nav as item}
        <li>
          <a class:active={item.active} href="#nav">
            {item.text}
            {#if item.more}<svg class="chev" viewBox="0 0 14 8" aria-hidden="true"><path d="M1 1l6 6l6-6" /></svg>{/if}
            {#if item.badge}<span class="new">{item.badge}</span>{/if}
          </a>
        </li>
      {/each}
    </ul>
  </nav>

  <div class="crumbs">
    <div class="container crumb-row">
      <a href="#home">Home</a>
      <svg viewBox="0 0 12 12" aria-hidden="true"><path d="M0 6h11M6 1l5 5l-5 5" /></svg>
      <a href="#contact">Contact</a>
    </div>
  </div>

  <main>
    <section class="container contact">
      <form class="card form-card">
        <h4>Get in touch</h4>
        <h3>Write Us A Message <span>[You Need To Login First]</span></h3>
        <div class="fields">
          {#each fields as f}
            <div class="field">
              <label for={f.id}>{f.label} {@render star()}</label>
              <input id={f.id} type={f.type} placeholder={f.hint} />
            </div>
          {/each}
          <div class="field wide">
            <label for="message">your message {@render star()}</label>
            <textarea id="message" placeholder="Enter Message"></textarea>
          </div>
        </div>
        <button class="send" type="button">SEND MESSAGE</button>
      </form>

      <aside class="card info-card">
        {#each contacts as c}
          <div class="info">
            <span class="info-icon">
              <svg viewBox="0 0 24 24" aria-hidden="true">
                {#if c.icon === 'phone'}
                  <path d="M23 1l-5-1q-1 0-1 1l-3 5q0 1 1 2l2 2q-2 5-8 8l-2-2q-1-1-2-1l-4 2q-1 0-1 1l1 5q0 1 1 1C14 24 24 13 24 2q0-1-1-1Z" />
                {:else if c.icon === 'open'}
                  <path d="M0 8L10 1q2-1 4 0L24 8v14q0 2-2 2H2q-2 0-2-2Z" />
                  <path d="M3 13l7 5q2 1 4 0l7-5" fill="none" stroke="#f7941d" />
                {:else}
                  <path d="M22 0L1 10q-2 2 1 4h8v8q1 3 4 1L24 2q0-2-2-2Z" />
                {/if}
              </svg>
            </span>
            <h5>{c.title}</h5>
            <p>{c.text}</p>
          </div>
        {/each}
      </aside>
    </section>

    <section class="map" aria-label="Map of Yogyakarta">
      <svg class="map-art" viewBox="0 0 1920 624" preserveAspectRatio="xMinYMin slice">
        {#each tiles as tile, t}
          <g transform={tileTransform(t)} stroke-linejoin="round" fill="none">
            <path d={tile.commercial} fill="#f8f0dd" />
            <path d={tile.pink} fill="#fde2e2" />
            <path d={tile.green} fill="#c3f0d4" />
            <path d={tile.path} stroke="#e0e1e6" stroke-width="5" />
            <path d={tile.minor} stroke="#d0dce8" stroke-width="6" />
            <path d={tile.mid} stroke="#cbd6df" stroke-width="13" />
            <path d={tile.wide} stroke="#cbd6df" stroke-width="21" />
            {#if tile.river}
              <path stroke="#8edaec" stroke-width="20" d="M75 30L150 170L190 250L215 320L230 420L255 500L285 600L310 720L330 790L385 890Q420 935 480 960L620 985Q680 1010 695 1070L708 1190" />
              <path fill="#8edaec" d="M680 1195H725L720 1250L690 1380L680 1541H648L655 1350L675 1250Z" />
              <path stroke="#cbd6df" stroke-width="12" d="M655 1200L780 1198" />
            {/if}
          </g>
        {/each}
        {#each tiles as tile, t}
          <g transform={tileTransform(t)} fill="none">
            <path d={tile.major2} stroke="#c3cfda" stroke-width="29" />
            <path d={tile.major2} stroke="#d5dee6" stroke-width="25" />
            <path d={tile.major} stroke="#c3cfda" stroke-width="36" />
            <path d={tile.major} stroke="#d5dee6" stroke-width="32" />
            <path d={tile.trail} stroke="#6cc5a0" stroke-width="3" />
          </g>
        {/each}
        <path d="M1288 15v190" stroke="#a6e3f2" stroke-width="2" />
        {#each arrows as [t, x, y, r]}
          <path transform="translate({mx(t, x)} {my(y)}) rotate({r})" d="M-5 0H2M1-3L5 0L1 3Z" fill="#7b8187" stroke="#7b8187" />
        {/each}
        <g class="street">
          {#each streets as [t, x, y, r, text, light]}
            <text class:light transform="translate({mx(t, x)} {my(y)}) rotate({r})" y="6">{text}</text>
          {/each}
          {#each tinyStreets as [t, x, y, r, text]}
            <text class="light tiny" transform="translate({mx(t, x)} {my(y)}) rotate({r})" y="4">{text}</text>
          {/each}
        </g>
        {#each buses as [t, x, y]}
          <g transform="translate({mx(t, x)} {my(y)})">
            <rect x="-9" y="-9" width="18" height="18" rx="5" fill="#4c6375" stroke="#fff" stroke-width="1" />
            <path fill="#fff" fill-rule="evenodd" d="M-5-4q0-2 2-2h6q2 0 2 2v8h-1v2h-2v-2h-4v2h-2v-2h-1ZM-3-3v3h6v-3Z" />
          </g>
        {/each}
        {#each places as p}
          <g class="place" text-anchor={p.a} fill={C[p.c]}>
            {#each p.l as line, i}
              <text x={mx(p.t, p.lx)} y={my(p.ly) + i * 17}>{line}</text>
            {/each}
          </g>
          <g transform="translate({mx(p.t, p.x)} {my(p.y)})">
            <path d="M0 19L-9 11A14 14 0 1 1 9 11Z" fill="#fff" stroke="#c4c8cc" />
            <circle r="13" fill={pinFill[p.c]} />
            <g fill="#fff">{@render pinGlyph(p.k)}</g>
          </g>
        {/each}
        <text class="city" x={mx(0, 911)} y={my(542)}>Yogyakarta</text>
        <text class="google" x={mx(1, 714)} y={my(1478)}><tspan fill="#4285f4">G</tspan><tspan fill="#ea4335">o</tspan><tspan fill="#fbbc05">o</tspan><tspan fill="#4285f4">g</tspan><tspan fill="#34a853">l</tspan><tspan fill="#ea4335">e</tspan></text>
      </svg>

      <div class="place-card">
        <div class="place-text">
          <strong>Yogyakarta</strong>
          <p>Yogyakarta City, Special Region of Yogyakarta</p>
          <a href="#map">View larger map</a>
        </div>
        <a class="directions" href="#directions">
          <svg viewBox="0 0 24 24" aria-hidden="true">
            <path d="M0 3L3 0L13 10L11 16Z" fill="#b8cffb" />
            <path d="M9 24V16Q9 12 12 9L16 5L12 1H24V13L20 9L16 13Q14 15 14 18V24Z" fill="#5b8df5" />
          </svg>
          Directions
        </a>
      </div>
      <button class="satellite" type="button" aria-label="Show satellite imagery"></button>
      <div class="zoom">
        <button type="button" aria-label="Zoom in"><svg viewBox="0 0 22 22" aria-hidden="true"><path d="M0 11h22M11 0v22" /></svg></button>
        <button type="button" aria-label="Zoom out"><svg viewBox="0 0 22 22" aria-hidden="true"><path d="M0 11h22" /></svg></button>
      </div>
      <div class="legal">
        <button type="button">Keyboard shortcuts</button>
        <span>Map data ©2025 Google</span>
        <a href="#terms">Terms</a>
        <a href="#report">Report a map error</a>
      </div>
    </section>

    <section class="newsletter">
      <h4>NEWSLETTER</h4>
      <p>Subscribe to our newsletter and get <span>10%</span> off your first purchase</p>
      <form>
        <input type="email" aria-label="Your email address" placeholder="Your email address" />
        <button type="button">SUBSCRIBE</button>
      </form>
    </section>
  </main>

  <footer>
    <div class="container">
      <div class="foot-grid">
        <div class="about">
          <a class="foot-logo" href="#top">{@render logo('foot', '#ffe45e', '#fdc437', '#fb9604')}</a>
          <p>Jika Anda memiliki pertanyaan, butuh rekomendasi, atau ingin konsultasi mengenai parfum, jangan ragu untuk menghubungi kami. Hubungi kami sekarang dan jadikan perjalanan aroma Anda tak terlupakan!</p>
          <span class="got">Got Question? Call us 24/7</span>
          <a class="call" href="#call">+62 8968 777 2494</a>
          <a class="mail" href="#mail">
            <svg viewBox="0 0 18 14" aria-hidden="true"><path d="M2 0h14q2 0 2 2L10 8Q9 9 8 8L0 2Q0 0 2 0ZM0 4l7 5q2 1 4 0l7-5v8q0 2-2 2H2q-2 0-2-2Z" /></svg>
            LuxAroma@gmail.com
          </a>
        </div>
        {#each linkColumns as col}
          <div>
            <h4>{col.title}</h4>
            <ul class="links">
              {#each col.links as link}<li><a href="#link">{link}</a></li>{/each}
            </ul>
          </div>
        {/each}
        <div>
          <h4>Follow Me:</h4>
          <div class="social">
            <a class="yt" href="#yt" aria-label="YouTube">
              <svg viewBox="0 0 24 24" aria-hidden="true"><path fill-rule="evenodd" d="M4 4q8-1 16 0q3 0 3 3q1 5 0 10q0 3-3 3q-8 1-16 0q-3 0-3-3q-1-5 0-10q0-3 3-3ZM10 8v7l5-3Z" /></svg>
            </a>
            <a class="ig" href="#ig" aria-label="Instagram">
              <svg viewBox="0 0 24 24" aria-hidden="true" stroke="#fff" stroke-width="2"><rect x="3" y="3" width="18" height="18" rx="5" fill="none" /><circle cx="12" cy="12" r="4" fill="none" /><circle cx="17" cy="7" r=".5" /></svg>
            </a>
            <a class="tt" href="#tt" aria-label="TikTok">
              <svg viewBox="0 0 24 28" aria-hidden="true"><path d="M12 0h5q0 6 7 7v5q-4 0-7-2v9a8 8 0 1 1-9-8v5a3 3 0 1 0 4 3Z" /></svg>
            </a>
          </div>
        </div>
      </div>
      <div class="bottom">
        <p>Copyright © 2025 <a href="#wahyu">Wahyu</a> - All Rights Reserved.</p>
        <div class="payments">
          {#each payments as p}
            <svg viewBox="0 0 40 25" role="img" aria-label={p}>
              {#if p === 'visa'}
                <rect x="1" width="38" height="25" fill="#f7f7f7" /><path d="M6 8h5v2h-3Z" fill="#f0a020" />
                <text x="20" y="17" font-size="12" font-style="italic" font-weight="700" fill="#1a6bab">VISA</text>
              {:else if p === 'mastercard'}
                <rect width="40" height="25" rx="2" fill="#000" /><circle cx="15" cy="10" r="8" fill="#eb1c24" /><circle cx="25" cy="10" r="8" fill="#f79e1b" />
                <path d="M20 4a8 8 0 0 1 0 12a8 8 0 0 1 0-12Z" fill="#ff5f00" /><text x="20" y="23" font-size="5" fill="#ccc">mastercard</text>
              {:else if p === 'paypal'}
                <rect x="1" width="38" height="25" fill="#f7f7f7" /><path d="M19 4h7q4 3 1 6q-2 3-6 2l-1 4h-4Z" fill="#1f8fd6" /><path d="M17 2h6q4 1 3 5q-1 4-6 4l-1 3h-4Z" fill="#1f3b80" />
                <text x="20" y="22" font-size="7" font-style="italic" font-weight="700" fill="#1f3b80">Pay<tspan fill="#1f9bd6">Pal</tspan></text>
              {:else if p === 'amex'}
                <rect width="40" height="25" fill="#2e77bc" /><text x="20" y="12" font-size="6" font-weight="700" fill="#dbe9f7">AMERICAN</text><text x="22" y="18" font-size="6" font-weight="700" fill="#dbe9f7">EXPRESS</text>
              {:else if p === 'electron'}
                <rect width="40" height="25" fill="#0263b2" /><text x="20" y="14" font-size="11" font-style="italic" font-weight="700" fill="#fff">VISA</text><text x="20" y="20" font-size="5" font-weight="700" fill="#cfe3f5">Electron</text>
              {:else}
                <rect x="1" width="38" height="25" fill="#fff" /><path d="M9 9q1-3 3-3q0 3-3 3ZM9 10q3-1 4 0q-2 3 1 5q-1 4-5 3q-4 0-4-5q1-4 4-3Z" fill="#111" /><text x="25" y="17" font-size="12" fill="#111">Pay</text>
              {/if}
            </svg>
          {/each}
        </div>
      </div>
    </div>
  </footer>

  <div class="helper h1">{@render face()}</div>
  <div class="helper h2">{@render face()}</div>
  <div class="helper h3">{@render face()}</div>
  <div class="helper dark h4">{@render face()}</div>
  <div class="helper dark h5">{@render face()}</div>
  <button class="to-top" type="button" aria-label="Back to top">
    <svg viewBox="0 0 16 10" aria-hidden="true"><path d="M2 8l6-6l6 6" /></svg>
  </button>
</div>

<style>
  :global(body) { margin: 0; background: #fff; }
  .page {
    position: relative;
    padding-bottom: 4px;
    overflow: hidden;
    color: #333;
    font-family: Poppins, Inter, sans-serif;
    font-size: 17px;
    line-height: 30px;
  }
  .page :global(*) { box-sizing: border-box; }
  .defs { position: absolute; width: 0; height: 0; }
  .container { width: 100%; max-width: 1425px; margin: 0 auto; }
  a { color: inherit; text-decoration: none; }
  ul, h3, h4, h5, p { margin: 0; padding: 0; list-style: none; }
  button, input, textarea, select { font: inherit; }
  button { padding: 0; border: 0; cursor: pointer; }
  ::placeholder { color: #808080; opacity: 1; }

  .topbar { border-bottom: 1px solid #eee; }
  .topbar-row { display: flex; justify-content: space-between; padding: 16px 0 15px; font-size: 16px; }
  .top-list { display: flex; }
  .top-list li + li { margin-left: 16px; padding-left: 22px; border-left: 1px solid #eee; }
  .top-list a { display: flex; align-items: center; gap: 8px; }
  .line-icon { width: 20px; height: 20px; fill: none; stroke: #f7941d; stroke-width: 1.5; }

  .header { display: grid; grid-template-columns: 379px 670px 1fr; align-items: start; height: 141px; padding-top: 37px; }
  .brand { padding: 15px 0 0 3px; }
  .brand svg { display: block; width: 198px; }
  .search { position: relative; display: flex; height: 63px; }
  .search select {
    width: 188px; padding: 0 24px; border: 1px solid #eee; border-right: 0; border-radius: 6px 0 0 6px; background: #fff; color: #333; appearance: none;
  }
  .search::before {
    content: ''; position: absolute; left: 154px; top: 25px; width: 8px; height: 8px;
    border: solid #555; border-width: 0 2px 2px 0; rotate: 45deg; pointer-events: none;
  }
  .search input { flex: 1; min-width: 0; padding: 0 25px; border: 1px solid #eee; border-right: 0; background: #fff; }
  .search button { display: flex; align-items: center; justify-content: center; width: 78px; border-radius: 0 6px 6px 0; background: #333; }
  .search button svg { width: 24px; fill: none; stroke: #fff; stroke-width: 2; }
  .actions { display: flex; justify-content: flex-end; gap: 36px; padding-top: 13px; }
  .actions a { position: relative; height: 26px; }
  .actions svg { display: block; width: 26px; height: 26px; }
  .count {
    position: absolute; left: 14px; top: -12px; width: 23px; height: 23px; border-radius: 50%;
    background: #f7941d; color: #fff; font-size: 14px; line-height: 23px; text-align: center;
  }

  .nav { background: #333; }
  .nav-list { display: flex; gap: 5px; }
  .nav a { position: relative; display: flex; align-items: center; gap: 8px; padding: 0 19px; color: #fff; font-size: 19px; font-weight: 500; line-height: 80px; }
  .nav a.active { background: #f7941d; }
  .chev { width: 14px; fill: none; stroke: #fff; stroke-width: 1.5; }
  .new { position: absolute; left: 26px; top: 2px; width: 48px; background: #f7941d; font-size: 11px; font-weight: 600; line-height: 23px; text-align: center; }
  .new::after { content: ''; position: absolute; left: 5px; top: 23px; border: 5px solid transparent; border-top-color: #f7941d; }

  .crumbs { background: #f6f7fb; }
  .crumb-row { display: flex; align-items: center; padding: 37px 0 38px; }
  .crumb-row svg { width: 12px; margin: 0 18px 0 13px; fill: none; stroke: #333; }

  .contact { display: grid; grid-template-columns: 937fr 450fr; gap: 38px; padding: 125px 0; }
  .card { padding: 62px; background: #fff; box-shadow: 0 0 19px rgba(0, 0, 0, 0.13); }
  .form-card h4 { color: #f7941d; font-size: 21px; font-weight: 500; line-height: 26px; }
  .form-card h3 { margin: 4px 0 37px; color: #424646; font-size: 31px; font-weight: 600; line-height: 42px; }
  .form-card h3 span { color: #dc3545; font-size: 15px; line-height: 15px; }
  .fields { display: grid; grid-template-columns: 1fr 1fr; gap: 22px 37px; }
  .wide { grid-column: span 2; }
  .field { display: flex; flex-direction: column; }
  label { display: flex; align-items: center; gap: 6px; margin-bottom: 12px; line-height: 26px; }
  .star { width: 9px; height: 9px; margin-top: 2px; stroke: #ff2c18; stroke-width: 2; }
  .field input, textarea { display: block; width: 100%; border: 1px solid #e6e6f0; background: #fff; padding: 0 25px; }
  .field input { height: 60px; }
  textarea { height: 225px; padding-top: 20px; resize: none; }
  .send { display: block; margin-top: 29px; width: 210px; height: 62px; background: #333; color: #fff; font-size: 17px; font-weight: 600; }
  .info + .info { margin-top: 37px; }
  .info-icon { display: flex; align-items: center; justify-content: center; width: 50px; height: 50px; border-radius: 3px; background: #f7941d; }
  .info-icon svg { width: 24px; fill: #fff; }
  h5 { margin: 18px 0 13px; font-size: 22px; font-weight: 500; line-height: 28px; }
  .info p { max-width: 270px; color: #555; }

  .map { position: relative; height: 624px; overflow: hidden; background: #f5f5f5; font-family: Roboto, sans-serif; }
  .map-art { display: block; width: 100%; height: 100%; }
  .map-art text { paint-order: stroke; stroke: #fff; stroke-width: 3; stroke-linejoin: round; }
  .place text { font-size: 17px; }
  .street text { fill: #42576b; font-size: 17px; font-weight: 500; text-anchor: middle; }
  .street .light { fill: #636b74; font-size: 16px; font-weight: 400; }
  .street .tiny { font-size: 11px; }
  .map-art .city { fill: #c5221f; font-size: 25px; font-weight: 700; text-anchor: middle; }
  .map-art .hospital { font-size: 17px; font-weight: 700; stroke: none; }
  .map-art .google { font-family: Lato, sans-serif; font-size: 22px; font-weight: 700; }
  .place-card {
    position: absolute; left: 13px; top: 13px; display: flex; justify-content: space-between; width: 376px; padding: 12px 24px 10px 15px;
    border-radius: 2px; background: #fff; box-shadow: 0 1px 4px rgba(0, 0, 0, 0.3);
  }
  .place-text { width: 240px; color: #5b5b5b; font-size: 15px; line-height: 18px; }
  .place-card strong { display: block; color: #000; font-size: 18px; font-weight: 500; line-height: 22px; }
  .place-card p { margin: 7px 0 16px; }
  .place-card a { color: #1a73e8; }
  .directions { display: flex; flex-direction: column; align-items: center; gap: 6px; padding-top: 6px; font-size: 15px; line-height: 18px; }
  .directions svg { width: 24px; height: 24px; }
  .satellite {
    position: absolute; left: 14px; top: 559px; width: 50px; height: 50px; border: 2px solid #fff; border-radius: 2px; box-shadow: 0 1px 4px rgba(0, 0, 0, 0.4);
    background: radial-gradient(circle at 70% 15%, #3f4a38 0, transparent 25%), repeating-linear-gradient(37deg, #75685c 0 2px, #665b52 2px 5px, #7d6f62 5px 6px);
  }
  .zoom { position: absolute; right: 12px; top: 493px; width: 50px; background: #fff; box-shadow: 0 1px 4px rgba(0, 0, 0, 0.3); }
  .zoom button { display: flex; align-items: center; justify-content: center; width: 50px; height: 50px; background: none; }
  .zoom button + button { background: linear-gradient(#e2e2e2, #e2e2e2) center top / 36px 1px no-repeat; }
  .zoom svg { width: 22px; stroke: #666; stroke-width: 5; }
  .legal { position: absolute; right: 0; bottom: 0; display: flex; gap: 16px; padding: 0 8px 0 6px; background: rgba(245, 245, 245, 0.7); color: #000; font-size: 12px; line-height: 17px; }
  .legal button { background: none; }

  .newsletter { display: flex; flex-direction: column; align-items: center; padding: 125px 20px; }
  .newsletter h4 { font-size: 21px; font-weight: 600; line-height: 26px; }
  .newsletter p { margin: 6px 0 36px; color: #808080; }
  .newsletter p span { color: #f7941d; }
  .newsletter form { display: flex; width: 100%; max-width: 770px; height: 70px; }
  .newsletter input { flex: 1; min-width: 0; padding: 0 37px; border: 2px solid #f4f4f4; border-right: 0; border-radius: 35px 0 0 35px; background: #fff; }
  .newsletter button { width: 169px; border-radius: 0 35px 35px 0; background: #f7941d; color: #fff; font-size: 17px; font-weight: 600; }

  footer { padding: 125px 0 150px; background: #222; color: #f6f6f6; }
  .foot-grid { display: grid; grid-template-columns: 610fr 244fr 244fr 327fr; }
  .about { display: flex; flex-direction: column; align-items: flex-start; padding-top: 5px; }
  .foot-logo svg { display: block; width: 500px; }
  .about p { max-width: 520px; margin: 54px 0 22px; }
  .got { line-height: 24px; }
  .call { color: #f7941d; font-size: 24px; font-weight: 600; line-height: 34px; }
  .mail { display: flex; align-items: center; gap: 5px; padding-top: 1px; color: #6a6a6a; }
  .mail svg { width: 18px; fill: #777; }
  footer h4 { font-size: 21px; font-weight: 600; line-height: 28px; }
  .links { margin-top: 31px; line-height: 40px; }
  .social { display: flex; gap: 13px; margin-top: 10px; }
  .social a { display: flex; align-items: center; justify-content: center; width: 44px; height: 44px; border-radius: 50%; }
  .social svg { width: 24px; height: 24px; fill: #fff; }
  .yt { background: #f00; }
  .ig { background: #e1306c; }
  .tt { border: 1px solid #444; background: #000; }
  .social .tt svg { height: 28px; }
  .bottom { display: flex; align-items: center; justify-content: space-between; padding-top: 25px; border-top: 1px solid #4a4a4a; }
  .bottom a { text-decoration: underline; }
  .payments { display: flex; gap: 20px; }
  .payments svg { width: 40px; height: 25px; text-anchor: middle; font-family: 'Open Sans', sans-serif; }

  .helper { position: absolute; right: 0; width: 50px; height: 49px; padding: 10px; border-radius: 6px 0 0 6px; background: #fff; box-shadow: 0 0 4px rgba(0, 0, 0, 0.05); }
  .helper svg { display: block; width: 30px; height: 30px; opacity: 0.5; }
  .helper.dark { background: none; box-shadow: none; }
  .h1 { top: 732px; }
  .h2 { top: 1393px; }
  .h3 { top: 2056px; background: none; }
  .h4 { top: 2715px; }
  .h5 { bottom: 136px; }
  .to-top { position: absolute; right: 13px; bottom: 17px; width: 50px; height: 50px; border-radius: 4px; background: #222; box-shadow: 0 0 10px rgba(0, 0, 0, 0.1); }
  .to-top svg { width: 16px; fill: none; stroke: #bbb; stroke-width: 4; }
</style>
